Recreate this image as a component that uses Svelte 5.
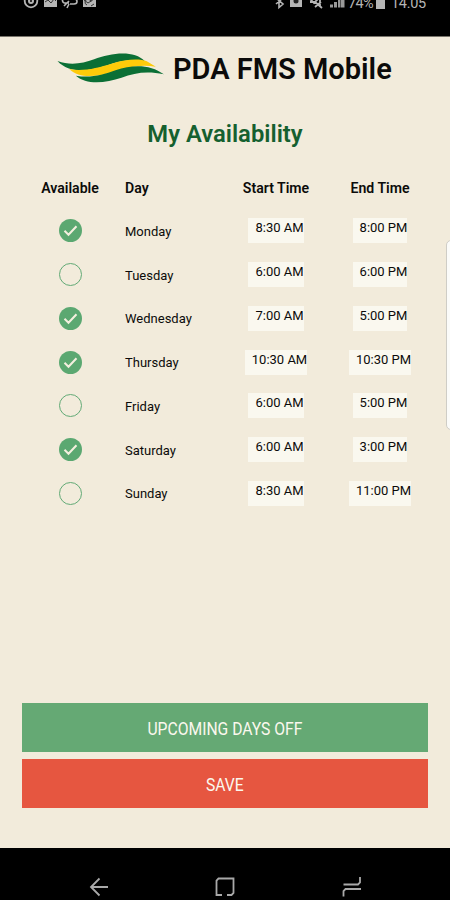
<script lang="ts">
	type DayRow = {
		day: string;
		available: boolean;
		start: string;
		end: string;
	};

	let rows = $state<DayRow[]>([
		{ day: 'Monday', available: true, start: '8:30 AM', end: '8:00 PM' },
		{ day: 'Tuesday', available: false, start: '6:00 AM', end: '6:00 PM' },
		{ day: 'Wednesday', available: true, start: '7:00 AM', end: '5:00 PM' },
		{ day: 'Thursday', available: true, start: '10:30 AM', end: '10:30 PM' },
		{ day: 'Friday', available: false, start: '6:00 AM', end: '5:00 PM' },
		{ day: 'Saturday', available: true, start: '6:00 AM', end: '3:00 PM' },
		{ day: 'Sunday', available: false, start: '8:30 AM', end: '11:00 PM' },
	]);
</script>

<div class="phone">
	<div class="status">
		<div class="status__row">
			<svg class="status__left" width="76" height="16" viewBox="0 0 76 16" fill="none" stroke="#b5b5b5">
				<circle cx="8" cy="5" r="6.3" stroke-width="1.8" />
				<circle cx="8" cy="5" r="2" stroke-width="2" />
				<path d="M21 0h13v11H21z" fill="#b5b5b5" stroke="none" />
				<path d="M22 6l3-2 3 3 3-4 2 2" stroke="#333" />
				<path d="M41 7c-3-2-1-6 2-5 2-4 8-3 8 1 4 0 4 5 0 5h-4M46 5l-5 5M46 8l-2 4M41 7h5" stroke-width="1.6" />
				<path d="M60 0h13v11H60z" fill="#b5b5b5" stroke="none" />
				<path d="M61 4l4 3 6-4M64 9a3 3 0 1 1 4-3M68 10l3-2" stroke="#333" />
			</svg>
			<svg class="status__right" width="72" height="16" viewBox="0 0 72 16" fill="none" stroke="#b5b5b5">
				<path d="M2 2l7 6-4 3.500V0l4 2-7 6" stroke-width="1.6" />
				<path d="M16 0h12v11H16z" fill="#b5b5b5" stroke="none" />
				<circle cx="22" cy="5" r="2.500" fill="#222" stroke="none" />
				<path d="M36 3l4 4 6-6v10M36 6h5l7 6M47 6l-6 5" stroke-width="1.8" />
				<path d="M56 11.500h3V8.500h-3zM60 11.500h3V6h-3zM64 11.500h2.500V3H64zM67 11.500h3.500V0H67z" fill="#999" stroke="none" />
			</svg>
			<span class="status__battery">74%</span>
			<span class="status__cell"></span>
			<span class="status__clock">14.05</span>
		</div>
	</div>

	<main class="app">
		<header class="brand">
			<svg class="brand__logo" width="107" height="30" viewBox="21 22 320 90">
				<path
					d="M22 46C60 60 96 54 132 41C182 22 252 12 284 47C246 38 210 46 168 60C118 76 58 86 22 46Z"
					fill="#0b6f35"
				/>
				<path
					d="M57 70C98 78 142 67 184 54C230 39 270 38 290 47L317 63C270 55 232 64 190 78C140 94 88 100 57 70Z"
					fill="#fecb0a"
				/>
				<path
					d="M77 90C120 98 158 88 196 74C252 55 302 58 341 86C292 75 254 81 214 96C166 112 108 118 77 90Z"
					fill="#0b6f35"
				/>
			</svg>
			<h1 class="brand__name">PDA FMS Mobile</h1>
		</header>

		<h2 class="title">My Availability</h2>

		<div class="schedule">
			<div class="schedule__row schedule__row--head">
				<span class="schedule__center">Available</span>
				<span>Day</span>
				<span class="schedule__center">Start Time</span>
				<span class="schedule__center">End Time</span>
			</div>
			{#each rows as row (row.day)}
				<div class="schedule__row">
					<button
						class="check"
						class:check--on={row.available}
						aria-label={row.day}
						aria-pressed={row.available}
						onclick={() => (row.available = !row.available)}
					>
						{#if row.available}
							<svg width="23" height="23" viewBox="0 0 23 23">
								<path d="M5.500 11.800l4 4 8-8.600" fill="none" stroke="#f4efdf" stroke-width="2" />
							</svg>
						{/if}
					</button>
					<span class="schedule__day">{row.day}</span>
					<span class="time">{row.start}</span>
					<span class="time">{row.end}</span>
				</div>
			{/each}
		</div>

		<div class="actions">
			<button class="action action--off"><span>UPCOMING DAYS OFF</span></button>
			<button class="action action--save"><span>SAVE</span></button>
		</div>

		<div class="edge-handle"></div>
	</main>

	<nav class="nav">
		<svg width="20" height="20" viewBox="0 0 20 20">
			<path d="M19 10H2M10.500 1.500L2 10l8.500 8.500" />
		</svg>
		<svg width="20" height="20" viewBox="0 0 20 20">
			<path d="M7 18H1.500V3.500l2-2h15V16l-2 2H12" />
		</svg>
		<svg width="20" height="20" viewBox="0 0 20 20">
			<path d="M1.500 7.500H16l2-2V0M19 12H3.500l-2 2v5.500" />
		</svg>
	</nav>
</div>

<style>
	:global(body) {
		margin: 0;
		background: #000;
	}

	.phone {
		display: flex;
		flex-direction: column;
		width: 450px;
		height: 900px;
		overflow: hidden;
		background: #000;
		font-family: Roboto, 'Liberation Sans', sans-serif;
		color: #0c0b0a;
	}

	button {
		border: 0;
		padding: 0;
		font: inherit;
	}

	.status {
		box-sizing: border-box;
		height: 37px;
		overflow: hidden;
		border-bottom: 1px solid #77736a;
	}

	.status__row {
		display: flex;
		align-items: center;
		height: 16px;
		margin-top: -4px;
		padding: 0 24px 0 23px;
		font-size: 14.5px;
		line-height: 16px;
		color: #b5b5b5;
	}

	.status__right {
		margin-left: auto;
	}

	.status__battery {
		width: 28px;
		margin-left: 2px;
		letter-spacing: -0.6px;
	}

	.status__cell {
		width: 9px;
		height: 12px;
		margin-bottom: 3px;
		background: #b5b5b5;
	}

	.status__clock {
		width: 35px;
		margin-left: 6px;
		letter-spacing: -0.3px;
	}

	.app {
		position: relative;
		display: flex;
		flex-direction: column;
		flex: 1;
		background: #f2ebdb;
	}

	.brand {
		display: flex;
		align-items: center;
		gap: 9px;
		height: 64px;
		padding-left: 57px;
	}

	.brand__logo {
		margin-top: -3px;
	}

	.brand__name {
		margin: 0;
		font-size: 29px;
		font-weight: 600;
		line-height: 34px;
		white-space: nowrap;
	}

	.title {
		margin: 19px 0 0;
		font-size: 23.8px;
		font-weight: 600;
		line-height: 28px;
		text-align: center;
		color: #15602f;
	}

	.schedule {
		margin-top: 28px;
		padding: 0 18px 0 15px;
		font-size: 13px;
	}

	.schedule__row {
		display: grid;
		grid-template-columns: 110px 99px 104px 104px;
		align-items: center;
		height: 43.75px;
	}

	.schedule__row--head {
		height: 24px;
		margin-bottom: 9px;
		font-size: 14.1px;
		font-weight: 600;
	}

	.schedule__center {
		text-align: center;
	}

	.schedule__day {
		padding-top: 1px;
	}

	.check {
		box-sizing: border-box;
		justify-self: center;
		width: 23px;
		height: 23px;
		border: 1px solid #62aa76;
		border-radius: 50%;
		background: transparent;
	}

	.check--on {
		border: 0;
		background: #5ba871;
	}

	.check svg {
		display: block;
	}

	.time {
		justify-self: center;
		box-sizing: border-box;
		height: 25px;
		padding-left: 7px;
		background: #faf8ef;
		line-height: 20px;
		white-space: nowrap;
	}

	.actions {
		display: flex;
		flex-direction: column;
		gap: 7px;
		margin: auto 22px 40px;
	}

	.action {
		height: 49px;
		padding-top: 2px;
		color: #fbf8ee;
		font-size: 19px;
	}

	.action span {
		display: inline-block;
		transform: scaleX(0.825);
	}

	.action--off {
		background: #65a974;
	}

	.action--save {
		background: #e65640;
	}

	.edge-handle {
		position: absolute;
		top: 203px;
		right: -6px;
		box-sizing: border-box;
		width: 10px;
		height: 190px;
		border: 1px solid #cfcdc6;
		border-radius: 5px;
		background: #fbfbf9;
	}

	.nav {
		display: flex;
		justify-content: space-between;
		box-sizing: border-box;
		height: 52px;
		padding: 29px 88.5px 0 89px;
	}

	.nav path {
		fill: none;
		stroke: #a9a9a9;
		stroke-width: 1.8;
	}
</style>
